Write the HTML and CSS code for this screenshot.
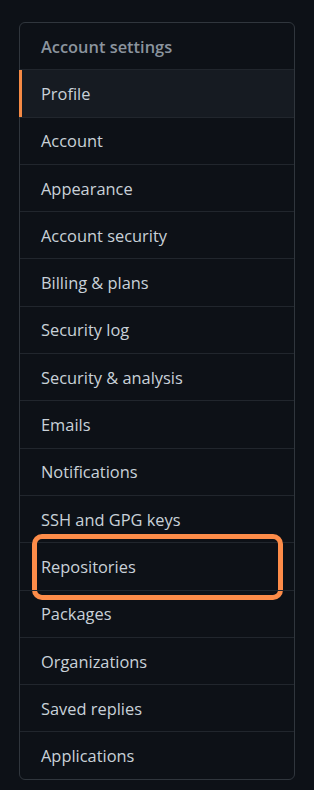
FILE: index.html
```html
<!DOCTYPE html>
<html>
<head>
<meta charset="utf-8">
<link rel="stylesheet" href="styles.css">
</head>
<body>
<nav class="menu">
  <div class="menu-head">Account settings</div>
  <a class="item selected">Profile</a>
  <a class="item">Account</a>
  <a class="item">Appearance</a>
  <a class="item">Account security</a>
  <a class="item">Billing &amp; plans</a>
  <a class="item">Security log</a>
  <a class="item">Security &amp; analysis</a>
  <a class="item">Emails</a>
  <a class="item">Notifications</a>
  <a class="item">SSH and GPG keys</a>
  <a class="item highlight">Repositories</a>
  <a class="item">Packages</a>
  <a class="item">Organizations</a>
  <a class="item">Saved replies</a>
  <a class="item">Applications</a>
</nav>
</body>
</html>
```
FILE: styles.css
```css
html, body {
  margin: 0;
  padding: 0;
  background: #0d1117;
}
body {
  padding: 22px 19px 12px 19px;
  font-family: "Open Sans", "Noto Sans", sans-serif;
}
.menu {
  border: 1px solid #30363d;
  border-radius: 6px;
  overflow: visible;
  display: flex;
  flex-direction: column;
}
.menu-head {
  height: 46.3px;
  display: flex;
  align-items: center;
  padding: 0 21px;
  color: #8b949e;
  font-weight: 600;
  font-size: 16.4px;
}
.item {
  position: relative;
  height: 46.3px;
  display: flex;
  align-items: center;
  padding: 0 21px;
  border-top: 1px solid #21262d;
  color: #c9d1d9;
  font-size: 16.4px;
}
.item.selected {
  background: #161b22;
}
.item.selected::before {
  content: "";
  position: absolute;
  left: -1px;
  top: 0;
  bottom: 0;
  width: 3px;
  background: #f58a45;
}
.item.highlight::after {
  content: "";
  position: absolute;
  left: 12px;
  right: 11px;
  top: -9px;
  bottom: -10px;
  border: 5px solid #fd8c49;
  border-radius: 10px;
}
```
